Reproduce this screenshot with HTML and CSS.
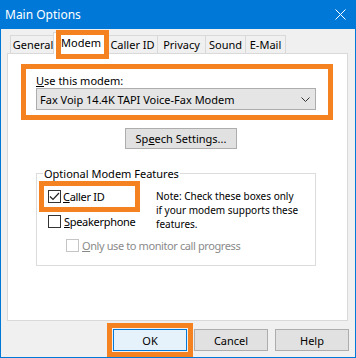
FILE: index.html
```html
<!DOCTYPE html>
<html>
<head>
<meta charset="UTF-8">
<link rel="stylesheet" href="styles.css">
</head>
<body>

<div class="window">
    <!-- title bar -->
    <div class="titlebar">
        <span class="title">Main Options</span>
        <svg class="close" width="11" height="11" viewBox="0 0 11 11">
            <path d="M0.5 0.5 L10.5 10.5 M10.5 0.5 L0.5 10.5" stroke="#fff" stroke-width="1" fill="none"/>
        </svg>
    </div>

    <div class="client">
        <div class="tabs">
            <div class="tab t-general">General</div>
            <div class="tab t-modem active">Modem</div>
            <div class="tab t-caller">Caller ID</div>
            <div class="tab t-privacy">Privacy</div>
            <div class="tab t-sound">Sound</div>
            <div class="tab t-mail">E-Mail</div>
        </div>

        <div class="panel">
            <div class="callout modem-pick">
                <div class="label"><u>U</u>se this modem:</div>
                <div class="combo">
                    <span>Fax Voip 14.4K TAPI Voice-Fax Modem</span>
                    <svg width="9" height="5" viewBox="0 0 9 5">
                        <path d="M0.5 0.5 L4.5 4.5 L8.5 0.5" stroke="#333" stroke-width="1" fill="none"/>
                    </svg>
                </div>
            </div>

            <div class="btn speech">Sp<u>e</u>ech Settings...</div>

            <div class="group">
                <div class="legend">Optional Modem Features</div>
                <div class="group-body">
                    <div class="options">
                        <div class="callout caller-row">
                            <span class="check">
                                <svg width="11" height="11" viewBox="0 0 11 11">
                                    <path d="M1 5.5 L4 8.5 L10 2" stroke="#222" stroke-width="1.2" fill="none"/>
                                </svg>
                            </span>
                            <span class="opt-text"><u>C</u>aller ID</span>
                        </div>
                        <div class="check-row speaker">
                            <span class="check"></span>
                            <span class="opt-text"><u>S</u>peakerphone</span>
                        </div>
                        <div class="check-row monitor disabled">
                            <span class="check"></span>
                            <span class="opt-text"><u>O</u>nly use to monitor call progress</span>
                        </div>
                    </div>
                    <div class="note">
                        <div>Note: Check these boxes only</div>
                        <div>if your modem supports these</div>
                        <div>features.</div>
                    </div>
                </div>
            </div>
        </div>

        <div class="buttons">
            <div class="callout ok-wrap"><div class="btn default">OK</div></div>
            <div class="btn">Cancel</div>
            <div class="btn">Help</div>
        </div>
    </div>
</div>

</body>
</html>
```

FILE: styles.css
```css
html, body {
    margin: 0;
    padding: 0;
    font-family: "Noto Sans", "Open Sans", sans-serif;
    font-size: 11px;
    color: #000;
    background: #fff;
}

.window {
    width: 356px;
    height: 358px;
    display: flex;
    flex-direction: column;
}

.titlebar {
    height: 29px;
    background: #0078d7;
    color: #fff;
    display: flex;
    align-items: center;
    justify-content: space-between;
    padding: 0 10px 0 5px;
    box-sizing: border-box;
}
.title {
    font-size: 12px;
    margin-top: -1px;
}

.client {
    height: 329px;
    background: #f0f0f0;
    border: 1px solid #0078d7;
    border-top: none;
    box-sizing: border-box;
    padding-top: 6px;
}

/* tabs */
.tabs {
    display: flex;
    align-items: flex-end;
    height: 18px;
    padding-left: 9px;
}
.tab {
    height: 18px;
    line-height: 17px;
    box-sizing: border-box;
    border: 1px solid #d9d9d9;
    border-bottom: none;
    background: #f0f0f0;
    text-align: center;
    margin-right: -1px;
}
.t-general { width: 46px; }
.t-caller { width: 51px; }
.t-privacy { width: 49px; }
.t-sound { width: 41px; }
.t-mail { width: 41px; }
.tab.active {
    width: 56px;
    height: 22px;
    line-height: 19px;
    margin: 0 -2px -1px -2px;
    background: #fff;
    position: relative;
    z-index: 2;
}
.tab.active::after {
    content: "";
    position: absolute;
    left: 2px;
    top: -3px;
    width: 53px;
    height: 29px;
    box-sizing: border-box;
    border: 5px solid #f58220;
}

.panel {
    margin-left: 6px;
    width: 341px;
    height: 268px;
    box-sizing: border-box;
    border: 1px solid #d9d9d9;
    background: #fff;
    display: flex;
    flex-direction: column;
    align-items: flex-start;
}

.callout {
    border: 5px solid #f58220;
    box-sizing: border-box;
}

.modem-pick {
    margin: 10px 0 0 13px;
    width: 312px;
    height: 56px;
    padding: 5px 0 0 10px;
}
.label {
    line-height: 13px;
    height: 13px;
}
.combo {
    margin-top: 1px;
    width: 280px;
    height: 22px;
    box-sizing: border-box;
    border: 1px solid #adadad;
    background: #e5e5e5;
    display: flex;
    align-items: center;
    justify-content: space-between;
    padding: 0 5px 0 3px;
}

.btn {
    width: 74px;
    height: 22px;
    box-sizing: border-box;
    border: 1px solid #adadad;
    background: #e1e1e1;
    display: flex;
    align-items: center;
    justify-content: center;
}
.speech {
    margin: 8px 0 0 117px;
    width: 112px;
    height: 21px;
}

.group {
    margin: 24px 0 0 28px;
    width: 280px;
    height: 93px;
    box-sizing: border-box;
    border: 1px solid #dcdcdc;
    display: flex;
    flex-direction: column;
    align-items: flex-start;
}
.legend {
    margin: -7px 0 0 6px;
    padding: 0 1px;
    line-height: 13px;
    background: #fff;
}
.group-body {
    display: flex;
    padding-left: 2px;
    margin-top: 1px;
}
.options {
    width: 101px;
    display: flex;
    flex-direction: column;
    white-space: nowrap;
}
.opt-text {
    letter-spacing: -0.3px;
}
.check {
    width: 13px;
    height: 13px;
    box-sizing: border-box;
    border: 1px solid #333;
    background: #fff;
    display: flex;
    align-items: center;
    justify-content: center;
    flex: none;
}
.caller-row {
    width: 101px;
    height: 31px;
    display: flex;
    align-items: center;
    padding-left: 4px;
    gap: 2px;
}
.check-row {
    display: flex;
    align-items: center;
    height: 13px;
    gap: 3px;
}
.speaker {
    margin-top: 3px;
    padding-left: 9px;
}
.monitor {
    margin-top: 11px;
    padding-left: 27px;
}
.monitor .opt-text {
    letter-spacing: -0.4px;
}
.disabled {
    color: #8a8a8a;
}
.disabled .check {
    border-color: #c5c5c5;
}
.note {
    margin: 8px 0 0 16px;
    white-space: nowrap;
    font-size: 10px;
}
.note div {
    height: 14px;
    line-height: 14px;
}

.buttons {
    margin-top: 2px;
    display: flex;
    justify-content: flex-end;
    align-items: flex-start;
    padding-right: 6px;
}
.buttons > .btn {
    margin-top: 6px;
}
.buttons > .btn + .btn {
    margin-left: 7px;
}
.ok-wrap {
    padding: 1px 1px 1px 1px;
    margin-right: 1px;
}
.btn.default {
    border-color: #0078d7;
    background: #e5f1fb;
}
```
